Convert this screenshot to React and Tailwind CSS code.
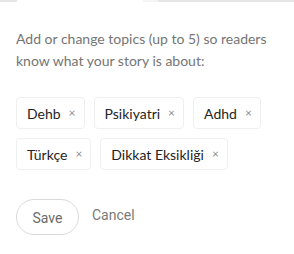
import React from 'react';

const topics = ['Dehb', 'Psikiyatri', 'Adhd', 'Türkçe', 'Dikkat Eksikliği'];

const Tag = ({ label }) => (
  <div className="flex items-center h-[32px] pl-[10px] pr-[8px] border border-[#efefef] rounded-[4px] bg-white">
    <span className="text-[14px] text-[#242424]">{label}</span>
    <span className="ml-[8px] text-[12px] text-[#8f8f8f]">×</span>
  </div>
);

export default function App() {
  return (
    <div className="w-[294px] h-[254px] bg-white overflow-hidden" style={{ fontFamily: 'Lato, "Noto Sans", sans-serif' }}>
      <div className="flex h-[2px]">
        <div className="w-[17px] bg-[#e6e6e6]" />
        <div className="w-[126px]" />
        <div className="w-[15px] bg-[#f4f4f4]" />
        <div className="flex-1 bg-[#e6e6e6]" />
      </div>
      <div className="px-[16px] pt-[26px]">
        <p className="text-[14px] leading-[22px] text-[#757575]">
          Add or change topics (up to 5) so readers know what your story is about:
        </p>
        <div className="flex flex-wrap gap-[9px] mt-[25px]">
          {topics.map((t) => (
            <Tag key={t} label={t} />
          ))}
        </div>
        <div className="flex items-center mt-[29px] gap-[13px]" style={{ fontFamily: 'Roboto, sans-serif' }}>
          <button className="h-[36px] w-[63px] rounded-full border border-[#d9d9d9] text-[14px] text-[#6b6b6b] pt-[2px]">Save</button>
          <span className="text-[14px] text-[#7a7a7a] -mt-[3px]">Cancel</span>
        </div>
      </div>
    </div>
  );
}
